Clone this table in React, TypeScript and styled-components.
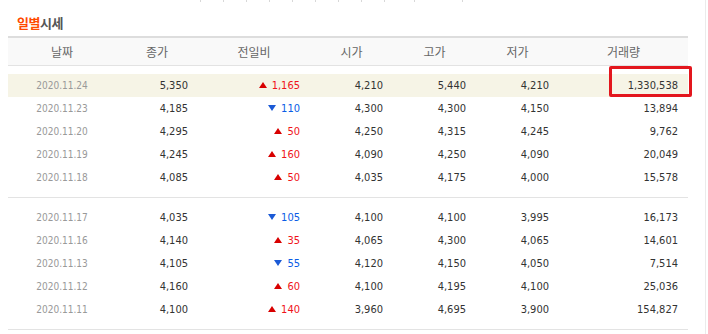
import React from "react";
import styled, { createGlobalStyle } from "styled-components";

type Dir = "up" | "down";

interface DayRow {
  date: string;
  close: string;
  diff: string;
  dir: Dir;
  open: string;
  high: string;
  low: string;
  volume: string;
}

const firstWeek: DayRow[] = [
  { date: "2020.11.24", close: "5,350", diff: "1,165", dir: "up", open: "4,210", high: "5,440", low: "4,210", volume: "1,330,538" },
  { date: "2020.11.23", close: "4,185", diff: "110", dir: "down", open: "4,300", high: "4,300", low: "4,150", volume: "13,894" },
  { date: "2020.11.20", close: "4,295", diff: "50", dir: "up", open: "4,250", high: "4,315", low: "4,245", volume: "9,762" },
  { date: "2020.11.19", close: "4,245", diff: "160", dir: "up", open: "4,090", high: "4,250", low: "4,090", volume: "20,049" },
  { date: "2020.11.18", close: "4,085", diff: "50", dir: "up", open: "4,035", high: "4,175", low: "4,000", volume: "15,578" },
];

const secondWeek: DayRow[] = [
  { date: "2020.11.17", close: "4,035", diff: "105", dir: "down", open: "4,100", high: "4,100", low: "3,995", volume: "16,173" },
  { date: "2020.11.16", close: "4,140", diff: "35", dir: "up", open: "4,065", high: "4,300", low: "4,065", volume: "14,601" },
  { date: "2020.11.13", close: "4,105", diff: "55", dir: "down", open: "4,120", high: "4,150", low: "4,050", volume: "7,514" },
  { date: "2020.11.12", close: "4,160", diff: "60", dir: "up", open: "4,100", high: "4,195", low: "4,100", volume: "25,036" },
  { date: "2020.11.11", close: "4,100", diff: "140", dir: "up", open: "3,960", high: "4,695", low: "3,900", volume: "154,827" },
];

const columns = [
  { label: "날짜", width: 108 },
  { label: "종가", width: 82 },
  { label: "전일비", width: 112 },
  { label: "시가", width: 83 },
  { label: "고가", width: 83 },
  { label: "저가", width: 83 },
  { label: "거래량", width: 129 },
];

const ticks = [200, 223, 246, 269, 292, 315, 338, 361, 384, 414, 462];

const GlobalStyle = createGlobalStyle`
  body {
    margin: 0;
    background: #ffffff;
  }
`;

const Page = styled.div`
  box-sizing: border-box;
  width: 706px;
  height: 334px;
  padding-left: 8px;
  border-right: 1px solid #ebebeb;
  overflow: hidden;
`;

const Ticks = styled.svg`
  display: block;
`;

const Title = styled.h3`
  margin: 12px 0 4px;
  padding-left: 9px;
  height: 18px;
  line-height: 18px;
  font-family: "Noto Sans CJK KR", sans-serif;
  font-size: 13px;
  font-weight: 700;
  color: #555555;
  letter-spacing: -0.5px;
`;

const Accent = styled.span`
  color: #ff4a00;
`;

const Table = styled.table`
  width: 680px;
  border-collapse: collapse;
  table-layout: fixed;
  border-top: 2px solid #dddddd;
`;

const HeadCell = styled.th`
  height: 27px;
  padding: 0;
  background: #f9f9f9;
  border-bottom: 1px solid #e3e3e3;
  font-family: "Noto Sans CJK KR", sans-serif;
  font-size: 12px;
  font-weight: 400;
  color: #666666;
  text-align: center;
`;

const Row = styled.tr<{ $highlight?: boolean }>`
  background: ${(p) => (p.$highlight ? "#f6f4e6" : "transparent")};
`;

const Spacer = styled.td<{ $line?: boolean }>`
  height: 8px;
  padding: 0;
  border-bottom: ${(p) => (p.$line ? "1px solid #e3e3e3" : "none")};
`;

const DateCell = styled.td`
  height: 23px;
  padding: 0;
  text-align: center;
  font-family: "DejaVu Sans Condensed", "DejaVu Sans", sans-serif;
  font-size: 10px;
  color: #999999;
`;

const NumCell = styled.td<{ $color?: string }>`
  position: relative;
  height: 23px;
  padding: 0 10px 0 0;
  text-align: right;
  font-family: "DejaVu Sans Condensed", "DejaVu Sans", sans-serif;
  font-size: 11px;
  color: ${(p) => p.$color ?? "#333333"};
  white-space: nowrap;
`;

const Arrow = styled.span<{ $dir: Dir }>`
  display: inline-block;
  width: 0;
  height: 0;
  margin-right: 5px;
  vertical-align: 1px;
  border-left: 4px solid transparent;
  border-right: 4px solid transparent;
  ${(p) =>
    p.$dir === "up"
      ? "border-bottom: 6px solid #d80000;"
      : "border-top: 6px solid #1b5ad6;"}
`;

const Marker = styled.span`
  position: absolute;
  left: 50px;
  right: -4px;
  top: -8px;
  bottom: 0;
  border: 3px solid #e3161d;
  border-radius: 2px;
`;

const DataRow = ({ row, highlight }: { row: DayRow; highlight?: boolean }) => (
  <Row $highlight={highlight}>
    <DateCell>{row.date}</DateCell>
    <NumCell>{row.close}</NumCell>
    <NumCell $color={row.dir === "up" ? "#f0131a" : "#0a5de6"}>
      <Arrow $dir={row.dir} />
      {row.diff}
    </NumCell>
    <NumCell>{row.open}</NumCell>
    <NumCell>{row.high}</NumCell>
    <NumCell>{row.low}</NumCell>
    <NumCell>
      {highlight && <Marker />}
      {row.volume}
    </NumCell>
  </Row>
);

const Gap = ({ line }: { line?: boolean }) => (
  <tr>
    <Spacer colSpan={7} $line={line} />
  </tr>
);

export default function App() {
  return (
    <>
      <GlobalStyle />
      <Page>
        <Ticks width="690" height="2">
          {ticks.map((x) => (
            <rect key={x} x={x - 8} y={0} width={1} height={2} fill="#d8d8d8" />
          ))}
        </Ticks>
        <Title>
          <Accent>일별</Accent>시세
        </Title>
        <Table>
          <colgroup>
            {columns.map((c) => (
              <col key={c.label} style={{ width: c.width }} />
            ))}
          </colgroup>
          <thead>
            <tr>
              {columns.map((c) => (
                <HeadCell key={c.label}>{c.label}</HeadCell>
              ))}
            </tr>
          </thead>
          <tbody>
            <Gap />
            {firstWeek.map((r, i) => (
              <DataRow key={r.date} row={r} highlight={i === 0} />
            ))}
            <Gap line />
            <Gap />
            {secondWeek.map((r) => (
              <DataRow key={r.date} row={r} />
            ))}
            <Gap line />
          </tbody>
        </Table>
      </Page>
    </>
  );
}
